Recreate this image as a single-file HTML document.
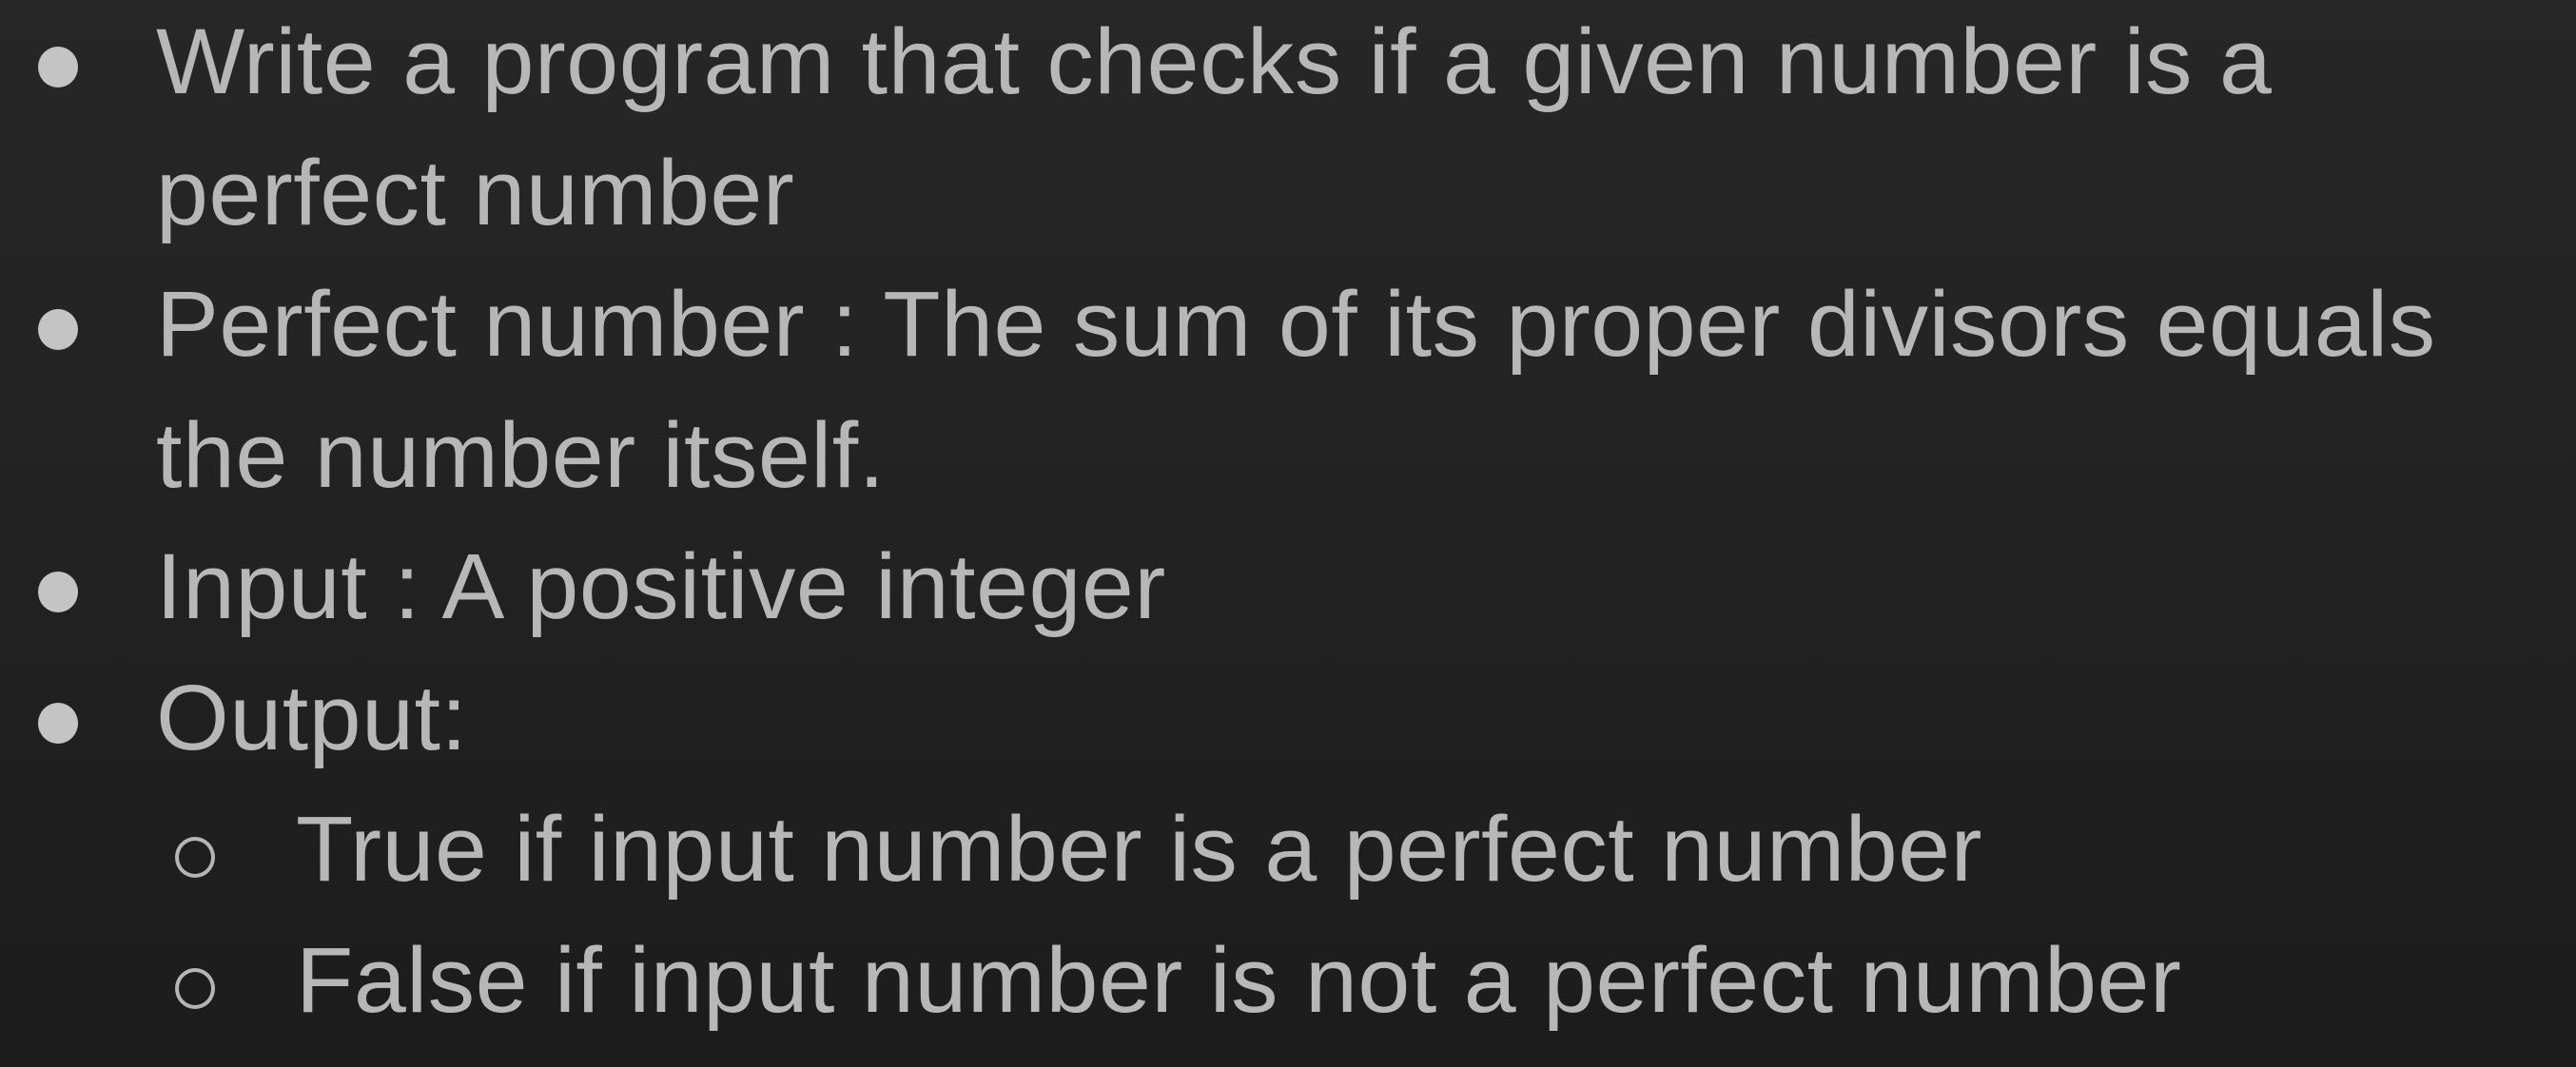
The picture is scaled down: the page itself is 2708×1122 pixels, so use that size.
<!DOCTYPE html>
<html><head><meta charset="utf-8"><style>
html,body{margin:0;padding:0}
body{width:2708px;height:1122px;overflow:hidden;background:linear-gradient(180deg,#272727 0%,#222 50%,#1c1c1c 100%);position:relative;font-family:"Liberation Sans",Arial,sans-serif;color:#b7b7b7}
.t{position:absolute;font-size:97px;line-height:97px;white-space:nowrap;transform:scaleX(1.018);transform-origin:0 0;letter-spacing:0.5px}
.d{position:absolute;width:42px;height:43px;border-radius:50%;background:#c4c4c4}
.o{position:absolute;width:34px;height:35px;border-radius:50%;border:4px solid #b5b5b5}
</style></head><body>
<div class="d" style="left:40px;top:49px"></div>
<div class="t" style="left:164px;top:16px">Write a program that checks if a given number is a</div>
<div class="t" style="left:164px;top:154px">perfect number</div>
<div class="d" style="left:40px;top:325px"></div>
<div class="t" style="left:164px;top:292px">Perfect number : The sum of its proper divisors equals</div>
<div class="t" style="left:164px;top:430px">the number itself.</div>
<div class="d" style="left:40px;top:601px"></div>
<div class="t" style="left:164px;top:568px">Input : A positive integer</div>
<div class="d" style="left:40px;top:739px"></div>
<div class="t" style="left:164px;top:706px">Output:</div>
<div class="o" style="left:184px;top:880px"></div>
<div class="t" style="left:311px;top:844px">True if input number is a perfect number</div>
<div class="o" style="left:184px;top:1018px"></div>
<div class="t" style="left:311px;top:982px">False if input number is not a perfect number</div>
</body></html>
